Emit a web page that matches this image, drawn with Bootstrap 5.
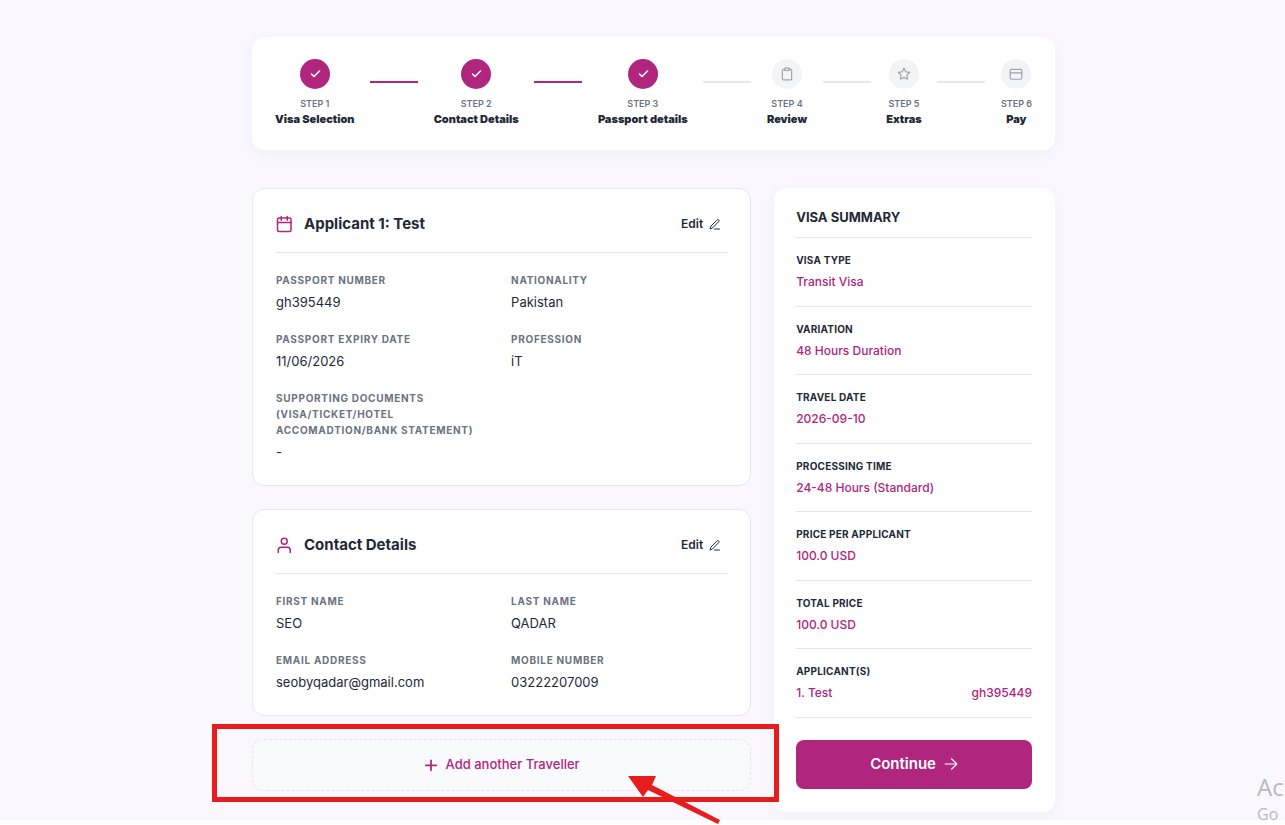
<!DOCTYPE html>
<html lang="en">
<head>
<meta charset="utf-8">
<meta name="viewport" content="width=device-width, initial-scale=1">
<title>Visa application</title>
<link href="https://cdn.jsdelivr.net/npm/bootstrap@5.3.0/dist/css/bootstrap.min.css" rel="stylesheet">
<style>
:root { --brand: #b0257d; --ink: #1f2937; --muted: #6b7280; --line: #e5e7eb; }
body { font-family: Inter, "Liberation Sans", sans-serif; color: var(--ink); background: #fff; min-height: 100vh; }
svg { fill: none; stroke: currentColor; stroke-linecap: round; stroke-linejoin: round; flex: none; }
.page { background: #faf8fe; padding: 37px 12px 8px 34px; }
.shell { max-width: 803px; }
.panel { background: #fff; border-radius: 12px; box-shadow: 0 4px 16px rgba(60, 40, 110, .04); }
.stepper { padding: 22px 23px; margin-bottom: 38px; min-height: 113px; }
.step-dot { width: 30px; height: 30px; background: #f3f4f6; color: #9ca3af; }
.done .step-dot { background: var(--brand); color: #fff; }
.step-no { font-size: 9px; line-height: 15px; margin-top: 7px; color: var(--muted); font-weight: 600; }
.step-name { font-size: 11px; line-height: 16px; font-weight: 900; }
.step-line { width: 48px; height: 2px; background: var(--line); margin-top: 22px; }
.step-line.done { background: var(--brand); }
.layout { display: grid; grid-template-columns: 16fr 9fr; column-gap: 23px; align-items: start; }
.info { background: #fff; border: 1px solid var(--line); border-radius: 12px; padding: 23px 22px 22px 23px; margin-bottom: 23px; }
.info-head { border-bottom: 1px solid var(--line); padding-bottom: 16px; margin-bottom: 19px; gap: 10px; }
.info-head h2 { font-size: 15px; line-height: 24px; font-weight: 700; }
.info-head > svg { color: var(--brand); }
.edit { font-size: 12px; line-height: 24px; font-weight: 600; color: var(--ink); padding: 0 8px; border: 0; gap: 6px; }
.fields { display: grid; grid-template-columns: 1fr 1fr; gap: 18px; }
.fields dt { font-size: 10px; line-height: 16px; font-weight: 700; color: var(--muted); letter-spacing: .07em; margin-bottom: 4px; text-transform: uppercase; }
.fields dd { font-size: 13px; line-height: 21px; }
.add { height: 52px; border: 1px dashed #e2e5ea; border-radius: 12px; background: #f9fafc; color: var(--brand); font-size: 13px; font-weight: 500; }
.summary { padding: 22px 23px 23px 22px; }
.summary h2 { font-size: 13px; line-height: 15px; font-weight: 700; padding-bottom: 12px; border-bottom: 1px solid var(--line); }
.summary-row { padding: 15px 0 14px; border-bottom: 1px solid var(--line); }
.summary-row dt { font-size: 10px; line-height: 1.5; font-weight: 700; letter-spacing: .02em; margin-bottom: 4px; text-transform: uppercase; }
.summary-row dd { font-size: 12px; line-height: 1.625; font-weight: 500; color: var(--brand); }
.go { height: 49px; margin-top: 22px; border-radius: 8px; background: var(--brand); color: #fff; font-size: 15px; font-weight: 600; }
.add:hover, .go:hover { background: #8f1b64; color: #fff; }
.callout { position: absolute; inset: -15px -28px -11px -40px; border: 5px solid #e71c1c; pointer-events: none; }
.pointer { position: absolute; right: 27px; top: 35px; fill: #e71c1c; stroke: none; pointer-events: none; }
.watermark { position: absolute; right: 0; bottom: 5px; width: 28px; height: 48px; overflow: hidden; font-family: "Open Sans", sans-serif; color: #b9b8bd; white-space: nowrap; }
.watermark b { display: block; font-weight: 400; font-size: 24px; line-height: 30px; }
.watermark i { display: block; font-style: normal; font-size: 16px; line-height: 24px; }
</style>
</head>
<body class="position-relative">
<main class="page">
  <div class="shell mx-auto">
    <div class="panel stepper d-flex justify-content-between align-items-start">
      <div class="done text-center">
        <div class="step-dot rounded-circle mx-auto d-flex align-items-center justify-content-center"><svg width="12" height="12" viewBox="0 0 24 24" stroke-width="3"><path d="M21 6 10 17l-5-5"/></svg></div>
        <div class="step-no">STEP 1</div><div class="step-name">Visa Selection</div>
      </div>
      <div class="step-line done"></div>
      <div class="done text-center">
        <div class="step-dot rounded-circle mx-auto d-flex align-items-center justify-content-center"><svg width="12" height="12" viewBox="0 0 24 24" stroke-width="3"><path d="M21 6 10 17l-5-5"/></svg></div>
        <div class="step-no">STEP 2</div><div class="step-name">Contact Details</div>
      </div>
      <div class="step-line done"></div>
      <div class="done text-center">
        <div class="step-dot rounded-circle mx-auto d-flex align-items-center justify-content-center"><svg width="12" height="12" viewBox="0 0 24 24" stroke-width="3"><path d="M21 6 10 17l-5-5"/></svg></div>
        <div class="step-no">STEP 3</div><div class="step-name">Passport details</div>
      </div>
      <div class="step-line"></div>
      <div class="text-center">
        <div class="step-dot rounded-circle mx-auto d-flex align-items-center justify-content-center"><svg width="14" height="14" viewBox="0 0 24 24" stroke-width="2"><path d="M16 4h2a2 2 0 0 1 2 2v14a2 2 0 0 1-2 2H6a2 2 0 0 1-2-2V6a2 2 0 0 1 2-2h2"/><rect x="8" y="2" width="8" height="4" rx="1"/></svg></div>
        <div class="step-no">STEP 4</div><div class="step-name">Review</div>
      </div>
      <div class="step-line"></div>
      <div class="text-center">
        <div class="step-dot rounded-circle mx-auto d-flex align-items-center justify-content-center"><svg width="14" height="14" viewBox="0 0 24 24" stroke-width="2"><path d="m12 2 3.09 6.26L22 9.27l-5 4.87 1.18 6.88L12 17.77l-6.18 3.25L7 14.14 2 9.27l6.91-1.01z"/></svg></div>
        <div class="step-no">STEP 5</div><div class="step-name">Extras</div>
      </div>
      <div class="step-line"></div>
      <div class="text-center">
        <div class="step-dot rounded-circle mx-auto d-flex align-items-center justify-content-center"><svg width="14" height="14" viewBox="0 0 24 24" stroke-width="2"><rect x="2" y="4" width="20" height="17" rx="2"/><path d="M2 10h20"/></svg></div>
        <div class="step-no">STEP 6</div><div class="step-name">Pay</div>
      </div>
    </div>

    <div class="layout">
      <div>
        <section class="info">
          <div class="info-head d-flex align-items-center">
            <svg width="18" height="18" viewBox="0 0 24 24" stroke-width="2"><rect x="2" y="4" width="18" height="18" rx="2"/><path d="M15 2v5M7 2v5M2 10h18"/></svg>
            <h2 class="mb-0">Applicant 1: Test</h2>
            <button type="button" class="btn edit ms-auto d-flex align-items-center">Edit <svg width="11" height="12" viewBox="1 0 22 24" stroke-width="2"><path d="M12 22h10M17 4a2.200 2.200 0 0 1 3.500 3L8 20l-5 2 1.500-5z"/></svg></button>
          </div>
          <dl class="fields mb-0">
            <div><dt>Passport Number</dt><dd class="mb-0">gh395449</dd></div>
            <div><dt>Nationality</dt><dd class="mb-0">Pakistan</dd></div>
            <div><dt>Passport Expiry Date</dt><dd class="mb-0">11/06/2026</dd></div>
            <div><dt>Profession</dt><dd class="mb-0">iT</dd></div>
            <div><dt>Supporting Documents (Visa/Ticket/Hotel Accomadtion/Bank Statement)</dt><dd class="mb-0">-</dd></div>
          </dl>
        </section>

        <section class="info">
          <div class="info-head d-flex align-items-center">
            <svg width="18" height="18" viewBox="0 0 24 24" stroke-width="2"><path d="M19 22v-3a4 4 0 0 0-4-4H7a4 4 0 0 0-4 4v3"/><circle cx="11" cy="7" r="4"/></svg>
            <h2 class="mb-0">Contact Details</h2>
            <button type="button" class="btn edit ms-auto d-flex align-items-center">Edit <svg width="11" height="12" viewBox="1 0 22 24" stroke-width="2"><path d="M12 22h10M17 4a2.200 2.200 0 0 1 3.500 3L8 20l-5 2 1.500-5z"/></svg></button>
          </div>
          <dl class="fields mb-0">
            <div><dt>First Name</dt><dd class="mb-0">SEO</dd></div>
            <div><dt>Last Name</dt><dd class="mb-0">QADAR</dd></div>
            <div><dt>Email Address</dt><dd class="mb-0">seobyqadar@gmail.com</dd></div>
            <div><dt>Mobile Number</dt><dd class="mb-0">03222207009</dd></div>
          </dl>
        </section>

        <div class="position-relative">
          <button type="button" class="btn add w-100 d-flex align-items-center justify-content-center gap-2"><svg width="14" height="14" viewBox="0 0 24 24" stroke-width="3"><path d="M12 4v17M3 12.500h18"/></svg>Add another Traveller</button>
          <div class="callout"></div>
          <svg class="pointer" width="98" height="50" viewBox="0 0 98 50"><path d="M2 2h28l-4 9 68 35-2 4-70-34-5 7z"/></svg>
        </div>
      </div>

      <aside class="panel summary">
        <h2 class="mb-0">VISA SUMMARY</h2>
        <dl class="mb-0">
          <div class="summary-row"><dt>Visa Type</dt><dd class="mb-0">Transit Visa</dd></div>
          <div class="summary-row"><dt>Variation</dt><dd class="mb-0">48 Hours Duration</dd></div>
          <div class="summary-row"><dt>Travel Date</dt><dd class="mb-0">2026-09-10</dd></div>
          <div class="summary-row"><dt>Processing Time</dt><dd class="mb-0">24-48 Hours (Standard)</dd></div>
          <div class="summary-row"><dt>Price Per Applicant</dt><dd class="mb-0">100.0 USD</dd></div>
          <div class="summary-row"><dt>Total Price</dt><dd class="mb-0">100.0 USD</dd></div>
          <div class="summary-row"><dt>Applicant(s)</dt><dd class="mb-0 d-flex justify-content-between"><span>1. Test</span><span>gh395449</span></dd></div>
        </dl>
        <button type="button" class="btn go w-100 d-flex align-items-center justify-content-center gap-2">Continue <svg width="14" height="14" viewBox="0 0 24 24" stroke-width="2"><path d="M2 12h20M13 3l9 9-9 9"/></svg></button>
      </aside>
    </div>
  </div>
</main>
<div class="watermark"><b>Ac</b><i>Go</i></div>
<script src="https://cdn.jsdelivr.net/npm/bootstrap@5.3.0/dist/js/bootstrap.bundle.min.js"></script>
</body>
</html>
